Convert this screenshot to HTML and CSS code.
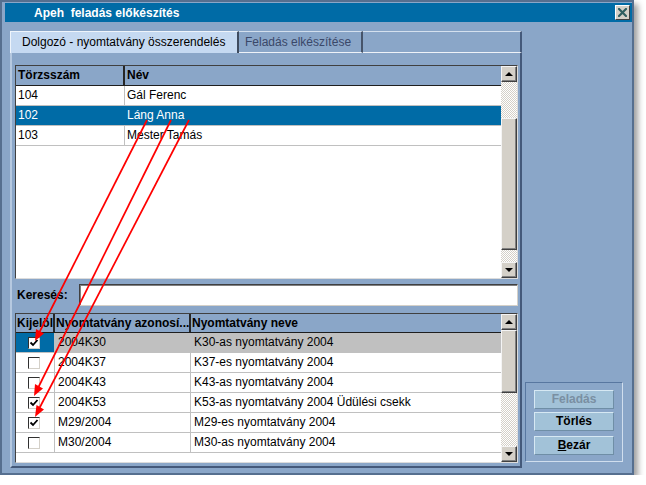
FILE: index.html
```html
<!DOCTYPE html>
<html lang="hu">
<head>
<meta charset="utf-8">
<title>Apeh feladás előkészítés</title>
<link rel="stylesheet" href="styles.css">
</head>
<body>
<div class="window">
  <div class="titlebar">
    <span class="title">Apeh  feladás előkészítés</span>
    <span class="close"><svg width="9" height="9" viewBox="0 0 9 9"><path d="M1 1 L8 8 M8 1 L1 8" stroke="#2f5e60" stroke-width="2.2" stroke-linecap="square"/></svg></span>
  </div>
  <div class="main">
    <div class="tabarea">
      <div class="tabs">
        <div class="tab active">Dolgozó - nyomtatvány összerendelés</div>
        <div class="tab inactive">Feladás elkészítése</div>
        <div class="tabfill"></div>
      </div>
      <div class="panel">
        <div class="grid upper">
          <div class="gbody">
            <div class="row head cols-up">
              <div class="cell">Törzsszám</div>
              <div class="cell">Név</div>
            </div>
            <div class="row cols-up">
              <div class="cell">104</div>
              <div class="cell">Gál Ferenc</div>
            </div>
            <div class="row cols-up selected">
              <div class="cell">102</div>
              <div class="cell">Láng Anna</div>
            </div>
            <div class="row cols-up">
              <div class="cell">103</div>
              <div class="cell">Mester Tamás</div>
            </div>
          </div>
          <div class="vscroll">
            <div class="sbtn"><span class="tri up"></span></div>
            <div class="track t36"></div>
            <div class="thumb th132"></div>
            <div class="track t12"></div>
            <div class="sbtn"><span class="tri down"></span></div>
          </div>
        </div>
        <div class="search">
          <span class="slabel">Keresés:</span>
          <div class="sinput"></div>
        </div>
        <div class="grid lower">
          <div class="gbody">
            <div class="row head lhead cols-lo">
              <div class="cell">Kijelöl</div>
              <div class="cell">Nyomtatvány azonosí...</div>
              <div class="cell">Nyomtatvány neve</div>
            </div>
            <div class="row cols-lo current">
              <div class="cell chk mark"><span class="box"><svg width="10" height="10" viewBox="0 0 10 10"><path d="M1.5 4.5 L4 7 L8.5 2" fill="none" stroke="#000" stroke-width="1.8"/></svg></span></div>
              <div class="cell">2004K30</div>
              <div class="cell">K30-as nyomtatvány 2004</div>
            </div>
            <div class="row cols-lo">
              <div class="cell chk"><span class="box"></span></div>
              <div class="cell">2004K37</div>
              <div class="cell">K37-es nyomtatvány 2004</div>
            </div>
            <div class="row cols-lo">
              <div class="cell chk"><span class="box"></span></div>
              <div class="cell">2004K43</div>
              <div class="cell">K43-as nyomtatvány 2004</div>
            </div>
            <div class="row cols-lo">
              <div class="cell chk"><span class="box"><svg width="10" height="10" viewBox="0 0 10 10"><path d="M1.5 4.5 L4 7 L8.5 2" fill="none" stroke="#000" stroke-width="1.8"/></svg></span></div>
              <div class="cell">2004K53</div>
              <div class="cell">K53-as nyomtatvány 2004 Üdülési csekk</div>
            </div>
            <div class="row cols-lo">
              <div class="cell chk"><span class="box"><svg width="10" height="10" viewBox="0 0 10 10"><path d="M1.5 4.5 L4 7 L8.5 2" fill="none" stroke="#000" stroke-width="1.8"/></svg></span></div>
              <div class="cell">M29/2004</div>
              <div class="cell">M29-es nyomtatvány 2004</div>
            </div>
            <div class="row cols-lo">
              <div class="cell chk"><span class="box"></span></div>
              <div class="cell">M30/2004</div>
              <div class="cell">M30-as nyomtatvány 2004</div>
            </div>
          </div>
          <div class="vscroll">
            <div class="sbtn"><span class="tri up"></span></div>
            <div class="thumb th63"></div>
            <div class="track t53"></div>
            <div class="sbtn"><span class="tri down"></span></div>
          </div>
        </div>
      </div>
    </div>
    <div class="side">
      <div class="group">
        <div class="btn disabled b1">Feladás</div>
        <div class="btn b2">Törlés</div>
        <div class="btn"><u>B</u>ezár</div>
      </div>
    </div>
  </div>
  <svg class="arrows" width="646" height="485" viewBox="0 0 646 485">
    <g stroke="#ff0000" stroke-width="1.7" fill="none">
      <line x1="147" y1="120" x2="39.5" y2="332"/>
      <line x1="171" y1="120" x2="38.5" y2="387"/>
      <line x1="189" y1="120" x2="39.5" y2="408"/>
    </g>
    <g fill="#ff0000">
      <polygon points="35,341 44,333.5 36,329"/>
      <polygon points="34,396 43,388.5 35,384"/>
      <polygon points="35,417 44,409.5 36.5,405"/>
    </g>
  </svg>
</div>
</body>
</html>
```
FILE: styles.css
```css
* { box-sizing: border-box; }
html, body { margin: 0; padding: 0; background: #ffffff; }
body {
  font-family: "Liberation Sans", Arial, sans-serif;
  font-size: 12px;
  color: #000;
}
.window {
  position: relative;
  width: 634px;
  height: 475px;
  border: 2px solid #566f8f;
  background: #8aa6c8;
  box-shadow: 4px 4px 6px rgba(0, 0, 0, 0.38);
  display: flex;
  flex-direction: column;
}
.titlebar {
  margin: 1px 0 0 3px;
  height: 19px;
  background: #006ba6;
  display: flex;
  align-items: center;
}
.title {
  flex: 1;
  padding-left: 29px;
  color: #fff;
  font-weight: bold;
  font-size: 12px;
  white-space: pre;
}
.close {
  width: 15px;
  height: 15px;
  margin-right: 2px;
  background: #d4d0c8;
  border: 1px solid;
  border-color: #ffffff #404040 #404040 #ffffff;
  display: flex;
  align-items: center;
  justify-content: center;
}
.main {
  flex: 1;
  display: flex;
  margin-top: 9px;
  padding-bottom: 5px;
}
.tabarea {
  margin-left: 8px;
  width: 512px;
  display: flex;
  flex-direction: column;
}
.tabs {
  display: flex;
  height: 22px;
}
.tab {
  height: 22px;
  line-height: 20px;
  white-space: nowrap;
}
.tab.active {
  width: 229px;
  padding-left: 11px;
  background: #c5d9f1;
  border-left: 1px solid #eef4fb;
  border-top: 1px solid #eef4fb;
  border-right: 2px solid #3e4b5f;
}
.tab.inactive {
  width: 124px;
  padding-left: 6px;
  color: #3a4868;
  border-top: 1px solid #d4e0ee;
  border-right: 2px solid #46546a;
  border-bottom: 1px solid #eef2f8;
}
.tabfill {
  flex: 1;
  border-top: 1px solid #d4e0ee;
  border-right: 2px solid #44597a;
  border-bottom: 1px solid #eef2f8;
}
.panel {
  flex: 1;
  border-left: 2px solid #b6c9e0;
  border-right: 2px solid #44597a;
  border-bottom: 2px solid #44597a;
  padding: 12px 2px 0 3px;
  display: flex;
  flex-direction: column;
}
.grid {
  display: flex;
  border: 1px solid;
  border-color: #404040 #dcdcdc #dcdcdc #404040;
}
.grid.upper { height: 214px; }
.grid.lower { height: 150px; }
.gbody {
  flex: 1;
  background: #fff;
  overflow: hidden;
}
.row {
  display: grid;
  height: 20px;
  border-bottom: 1px solid #c0c0c0;
}
.cols-up { grid-template-columns: 109px 1fr; }
.cols-lo { grid-template-columns: 39px 136px 1fr; }
.cell {
  padding-left: 2px;
  line-height: 19px;
  white-space: nowrap;
  overflow: hidden;
  border-right: 1px solid #c0c0c0;
}
.cols-lo .cell { padding-left: 3px; }
.cell:last-child { border-right: none; }
.row.head {
  background: #8aa6c8;
  border-bottom: 1px solid #1e1e1e;
  font-weight: bold;
}
.row.head .cell { border-right: 2px solid #262626; padding-left: 2px; }
.row.head .cell:last-child { border-right: none; }
.row.lhead { height: 19px; }
.row.lhead .cell { line-height: 18px; padding-left: 1px; }
.row.selected {
  background: #006ba6;
  color: #fff;
}
.row.selected .cell { border-right-color: #006ba6; }
.row.current { background: #c0c0c0; }
.row.current .cell { border-right-color: #c0c0c0; }
.cell.chk {
  display: flex;
  align-items: center;
  padding-left: 12px;
}
.cell.mark { background: #006ba6; }
.box {
  width: 12px;
  height: 12px;
  background: #fff;
  border: 1px solid;
  border-color: #303030 #d4d0c8 #d4d0c8 #303030;
  display: flex;
  align-items: center;
  justify-content: center;
}
.vscroll {
  width: 16px;
  display: flex;
  flex-direction: column;
}
.sbtn, .thumb {
  background: #d4d0c8;
  border: 1px solid;
  border-color: #f4f4f4 #404040 #404040 #f4f4f4;
  box-shadow: inset -1px -1px 0 #808080;
}
.sbtn {
  height: 16px;
  display: flex;
  align-items: center;
  justify-content: center;
}
.tri {
  width: 0;
  height: 0;
  border-left: 4px solid transparent;
  border-right: 4px solid transparent;
}
.tri.up { border-bottom: 4px solid #000; }
.tri.down { border-top: 4px solid #000; }
.track {
  background: repeating-conic-gradient(#d4d0c8 0 25%, #ffffff 0 50%) 0 0 / 2px 2px;
}
.t36 { height: 36px; }
.t12 { height: 12px; }
.t53 { height: 53px; }
.th132 { height: 132px; }
.th63 { height: 63px; }
.search {
  margin: 5px 0 7px;
  height: 22px;
  display: flex;
  align-items: center;
}
.slabel {
  width: 64px;
  padding-left: 2px;
  font-weight: bold;
}
.sinput {
  flex: 1;
  height: 22px;
  background: #fff;
  border: 1px solid;
  border-color: #404040 #d4d0c8 #d4d0c8 #404040;
  box-shadow: inset 1px 1px 0 #808080;
}
.side {
  width: 110px;
  display: flex;
  flex-direction: column;
  justify-content: flex-end;
  padding: 0 9px 6px 3px;
}
.group {
  height: 80px;
  border: 1px solid;
  border-color: #5877a0 #d0deee #d0deee #5877a0;
  padding: 7px 8px 0 8px;
  display: flex;
  flex-direction: column;
}
.btn {
  width: 80px;
  height: 19px;
  line-height: 17px;
  text-align: center;
  font-weight: bold;
  background: #a2c2d8;
  border: 1px solid;
  border-color: #d6e8f3 #6f8ea6 #6f8ea6 #d6e8f3;
}
.btn.disabled { color: #7a8fa2; }
.b1 { margin-bottom: 3px; }
.b2 { margin-bottom: 5px; }
.arrows {
  position: absolute;
  left: -2px;
  top: -2px;
  pointer-events: none;
}
```
